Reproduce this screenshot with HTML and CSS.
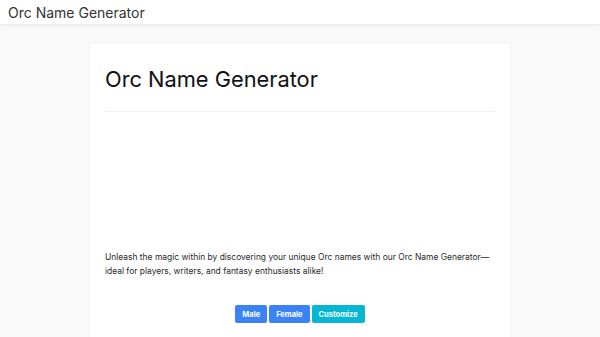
FILE: index.html
```html
<!DOCTYPE html>
<html lang="en">
<head>
  <meta charset="UTF-8">
  <title>Orc Name Generator</title>
  <meta name="viewport" content="width=device-width, initial-scale=1">
  <link rel="stylesheet" href="styles.css">
</head>
<body>
  <div class="topbar">
    <span class="site-title">Orc Name Generator</span>
  </div>
  <div class="page">
    <div class="card">
      <h1>Orc Name Generator</h1>
      <hr>
      <div class="ad-slot"></div>
      <p class="intro">Unleash the magic within by discovering your unique Orc names with our Orc Name Generator—ideal for players, writers, and fantasy enthusiasts alike!</p>
      <div class="buttons">
        <button class="btn btn-blue">Male</button>
        <button class="btn btn-blue">Female</button>
        <button class="btn btn-cyan">Customize</button>
      </div>
    </div>
  </div>
</body>
</html>
```

FILE: styles.css
```css
body {
  margin: 0;
  background: #f9f9f9;
  color: #222;
  font-family: Inter, "Noto Sans", sans-serif;
}
.topbar {
  background: #fff;
  height: 24px;
  padding: 0 8px;
  display: flex;
  align-items: center;
  box-shadow: 0 1px 3px #0000000d;
  border-bottom: 1px solid #eee;
}
.site-title {
  font-size: 14px;
  color: #333;
}
.page {
  padding-top: 19px;
  display: flex;
  justify-content: center;
}
.card {
  width: 390px;
  background: #fff;
  padding: 15px 15px 40px 15px;
  box-shadow: 0 0 3px #0000000d;
}
h1 {
  font-size: 21.8px;
  font-weight: 400;
  color: #111;
  margin: 6px 0 0 0;
  line-height: 1.3;
}
hr {
  border: 0;
  border-top: 1px solid #f0f0f0;
  margin: 18px 0 0 0;
}
.ad-slot {
  height: 138px;
}
.intro {
  font-size: 8.45px;
  line-height: 14px;
  color: #2a2a2a;
  margin: 0;
}
.buttons {
  display: flex;
  justify-content: center;
  gap: 2px;
  margin-top: 27px;
}
.btn {
  border: 0;
  border-radius: 2px;
  color: #fff;
  font-family: Inter, "Noto Sans", sans-serif;
  font-size: 7.5px;
  font-weight: 700;
  height: 18px;
  padding: 0 7px;
}
.btn-blue {
  background: #3b82f6;
}
.btn-cyan {
  background: #06b6d4;
}
```
